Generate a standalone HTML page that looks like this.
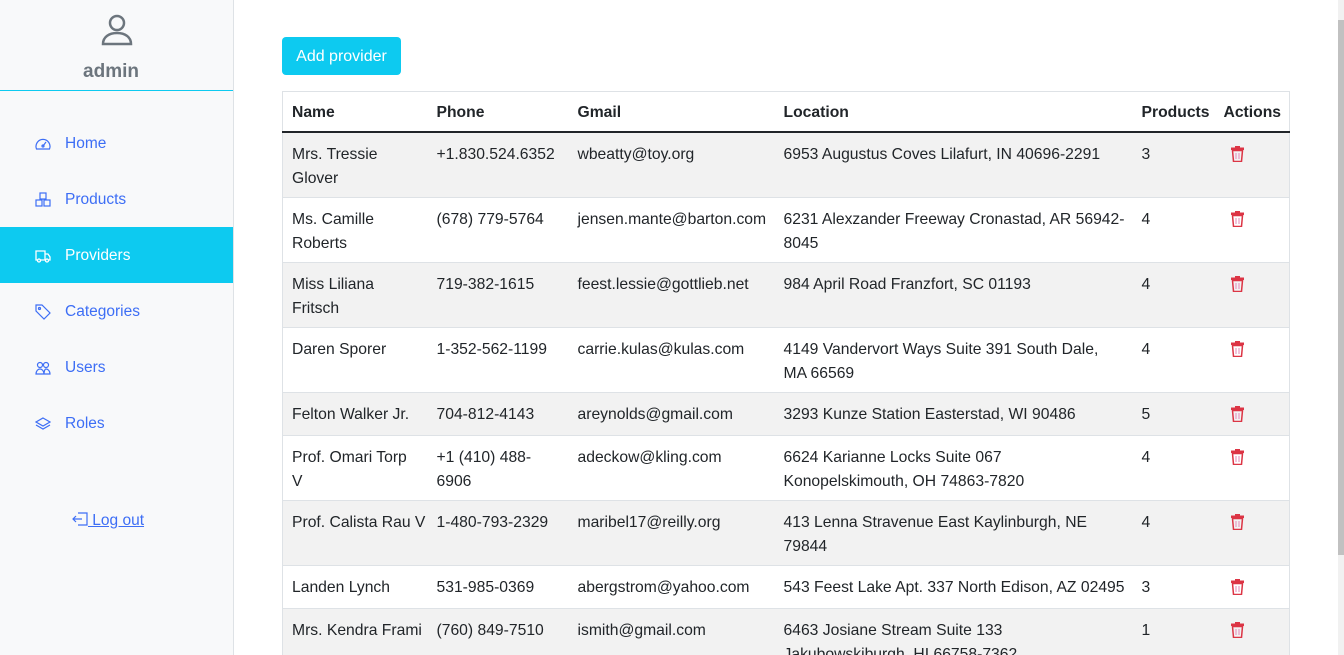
<!DOCTYPE html>
<html><head><meta charset="utf-8"><style>
*{box-sizing:border-box;margin:0;padding:0}
html,body{width:1344px;height:655px;overflow:hidden}
body{background:#fff;font-family:"Liberation Sans",sans-serif;color:#212529;position:relative}
.side{position:absolute;left:0;top:0;width:234px;height:655px;background:#f8f9fa;border-right:1px solid #dee2e6}
.hdr{height:91px;border-bottom:1px solid #0dcaf0;text-align:center}
.admin{position:absolute;top:61px;left:0;width:222px;text-align:center;font-size:19px;font-weight:bold;color:#6c757d}
.nav{position:absolute;left:0;width:233px;height:56px;display:flex;align-items:center;padding-left:35px;color:#3d6ef5;font-size:15.5px;padding-top:2px}
.nav svg{margin-right:14px}
.nav.act{background:#0dcaf0;color:#fff}
.logout{position:absolute;top:512px;left:72px;font-size:15.5px;color:#3d6ef5;text-decoration:underline}
.btn{position:absolute;left:282px;top:37px;width:119px;height:38px;background:#0dcaf0;border-radius:4px;color:#fff;font-size:16px;line-height:40px;text-align:center}
table{position:absolute;left:282px;top:91px;border-collapse:collapse;table-layout:fixed;width:1007px;font-size:15.7px;border:1px solid #dee2e6}
th{text-align:left;font-weight:bold;height:40px;padding:4px 8px 0 9px;border-bottom:2px solid #212529;white-space:nowrap}
td{vertical-align:top;padding:10px 8px 6px 9px;line-height:24px;border-bottom:1px solid #dee2e6;white-space:nowrap;color:#212529}
tr.s td{background:#f2f2f2}
.scr{position:absolute;right:0;top:0;width:6px;height:655px;background:#f1f1f1}
.scr div{position:absolute;top:20px;left:0;width:6px;height:535px;background:#c1c1c1}
</style></head><body>
<div class="side">
<div class="hdr"><svg width="34" height="34" viewBox="0 0 34 34" style="margin-top:13px" fill="none" stroke="#6c757d" stroke-width="2.5"><circle cx="17" cy="10" r="7"/><path d="M3 31c0-7 6-11 14-11s14 4 14 11z"/></svg></div>
<div class="admin">admin</div>
</div>
<div class="nav" style="top:115px"><svg width="16" height="16" viewBox="0 0 16 16" fill="none" stroke="currentColor" stroke-width="1.2"><path d="M1.5 13a7 7 0 1 1 13 0z"/><path d="M8 10l3-4"/><circle cx="8" cy="10" r="1"/></svg>Home</div>
<div class="nav" style="top:171px"><svg width="16" height="16" viewBox="0 0 16 16" fill="none" stroke="currentColor" stroke-width="1.2"><rect x="5" y="1" width="6" height="6"/><rect x="1" y="8" width="6" height="6"/><rect x="9" y="8" width="6" height="6"/></svg>Products</div>
<div class="nav act" style="top:227px"><svg width="16" height="16" viewBox="0 0 16 16" fill="none" stroke="currentColor" stroke-width="1.3"><path d="M1 3h9v9H1zM10 6h3l2 3v3h-5"/><circle cx="4" cy="12.5" r="1.5" fill="#0dcaf0"/><circle cx="12" cy="12.5" r="1.5" fill="#0dcaf0"/></svg>Providers</div>
<div class="nav" style="top:283px"><svg width="16" height="16" viewBox="0 0 16 16" fill="none" stroke="currentColor" stroke-width="1.2"><path d="M1 1h6l8 8-6 6-8-8z"/><circle cx="4.5" cy="4.5" r="1"/></svg>Categories</div>
<div class="nav" style="top:339px"><svg width="16" height="16" viewBox="0 0 16 16" fill="none" stroke="currentColor" stroke-width="1.2"><circle cx="5" cy="5" r="2.5"/><circle cx="11" cy="5" r="2.5"/><path d="M1 14c0-3 2-5 4-5s4 2 4 5zM9 14c0-3 1-5 2-5 2 0 4 2 4 5z"/></svg>Users</div>
<div class="nav" style="top:395px"><svg width="16" height="16" viewBox="0 0 16 16" fill="none" stroke="currentColor" stroke-width="1.2"><path d="M8 2l7 4-7 4-7-4z"/><path d="M1 9l7 4 7-4"/></svg>Roles</div>
<div class="logout"><svg width="16" height="14" viewBox="0 0 16 14" fill="none" stroke="#3d6ef5" stroke-width="1.2" style="vertical-align:-1px"><path d="M6 1h9v12H6M1 7h9M4 4L1 7l3 3"/></svg> Log out</div>
<div class="btn">Add provider</div>
<table>
<colgroup><col style="width:145px"><col style="width:141px"><col style="width:206px"><col style="width:358px"><col style="width:82px"><col style="width:75px"></colgroup>
<tr><th>Name</th><th>Phone</th><th>Gmail</th><th>Location</th><th>Products</th><th>Actions</th></tr>
<tr class="s"><td>Mrs. Tressie<br>Glover</td><td>+1.830.524.6352</td><td>wbeatty@toy.org</td><td>6953 Augustus Coves Lilafurt, IN 40696-2291</td><td>3</td><td>T</td></tr>
<tr><td>Ms. Camille<br>Roberts</td><td>(678) 779-5764</td><td>jensen.mante@barton.com</td><td>6231 Alexzander Freeway Cronastad, AR 56942-<br>8045</td><td>4</td><td>T</td></tr>
<tr class="s"><td>Miss Liliana<br>Fritsch</td><td>719-382-1615</td><td>feest.lessie@gottlieb.net</td><td>984 April Road Franzfort, SC 01193</td><td>4</td><td>T</td></tr>
<tr><td>Daren Sporer</td><td>1-352-562-1199</td><td>carrie.kulas@kulas.com</td><td>4149 Vandervort Ways Suite 391 South Dale,<br>MA 66569</td><td>4</td><td>T</td></tr>
<tr class="s"><td>Felton Walker Jr.</td><td>704-812-4143</td><td>areynolds@gmail.com</td><td>3293 Kunze Station Easterstad, WI 90486</td><td>5</td><td>T</td></tr>
<tr><td>Prof. Omari Torp<br>V</td><td>+1 (410) 488-<br>6906</td><td>adeckow@kling.com</td><td>6624 Karianne Locks Suite 067<br>Konopelskimouth, OH 74863-7820</td><td>4</td><td>T</td></tr>
<tr class="s"><td>Prof. Calista Rau V</td><td>1-480-793-2329</td><td>maribel17@reilly.org</td><td>413 Lenna Stravenue East Kaylinburgh, NE<br>79844</td><td>4</td><td>T</td></tr>
<tr><td>Landen Lynch</td><td>531-985-0369</td><td>abergstrom@yahoo.com</td><td>543 Feest Lake Apt. 337 North Edison, AZ 02495</td><td>3</td><td>T</td></tr>
<tr class="s"><td>Mrs. Kendra Frami</td><td>(760) 849-7510</td><td>ismith@gmail.com</td><td>6463 Josiane Stream Suite 133<br>Jakubowskiburgh, HI 66758-7362</td><td>1</td><td>T</td></tr>
</table>
<div class="scr"><div></div></div>
<script>
document.querySelectorAll('td:last-child').forEach(function(t){t.innerHTML='<svg width="15" height="16" viewBox="0 0 15 16" style="display:block;margin:3px 0 7px 6px"><rect x="1" y="1.5" width="13" height="2.5" fill="#dc3545"/><rect x="5" y="0" width="5" height="2" fill="#dc3545"/><path d="M2.5 4.5h10l-1 11h-8z" fill="none" stroke="#dc3545" stroke-width="1.5"/><path d="M6 7v6M9 7v6" stroke="#e685b5" stroke-width="1"/></svg>';});
</script>
</body></html>
